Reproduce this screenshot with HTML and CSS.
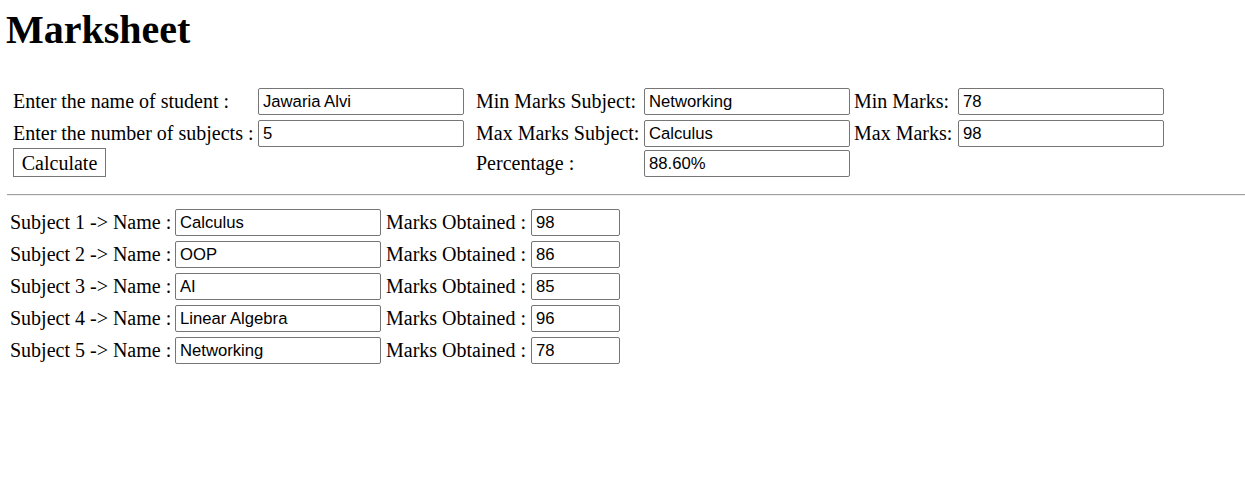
FILE: index.html
```html
<!DOCTYPE html>
<html lang="en">
<head>
<meta charset="utf-8">
<title>Marksheet</title>
<link rel="stylesheet" href="styles.css">
</head>
<body>
<h1 class="title">Marksheet</h1>
<form class="summary">
  <label class="cell label">Enter the name of student :</label>
  <div class="cell"><input class="field field-wide" type="text" value="Jawaria Alvi"></div>
  <label class="cell label label-mid">Min Marks Subject:</label>
  <div class="cell"><input class="field field-wide" type="text" value="Networking"></div>
  <label class="cell label label-right">Min Marks:</label>
  <div class="cell"><input class="field field-wide" type="text" value="78"></div>

  <label class="cell label">Enter the number of subjects :</label>
  <div class="cell"><input class="field field-wide" type="text" value="5"></div>
  <label class="cell label label-mid">Max Marks Subject:</label>
  <div class="cell"><input class="field field-wide" type="text" value="Calculus"></div>
  <label class="cell label label-right">Max Marks:</label>
  <div class="cell"><input class="field field-wide" type="text" value="98"></div>

  <div class="cell cell-last cell-button"><button class="calc" type="button">Calculate</button></div>
  <div class="cell cell-last"></div>
  <label class="cell cell-last label label-mid">Percentage :</label>
  <div class="cell cell-last"><input class="field field-wide" type="text" value="88.60%"></div>
</form>
<div class="divider"></div>
<div class="subjects">
  <label class="label">Subject 1 -&gt; Name :</label>
  <input class="field field-wide" type="text" value="Calculus">
  <label class="label label-marks">Marks Obtained :</label>
  <input class="field field-narrow" type="text" value="98">

  <label class="label">Subject 2 -&gt; Name :</label>
  <input class="field field-wide" type="text" value="OOP">
  <label class="label label-marks">Marks Obtained :</label>
  <input class="field field-narrow" type="text" value="86">

  <label class="label">Subject 3 -&gt; Name :</label>
  <input class="field field-wide" type="text" value="AI">
  <label class="label label-marks">Marks Obtained :</label>
  <input class="field field-narrow" type="text" value="85">

  <label class="label">Subject 4 -&gt; Name :</label>
  <input class="field field-wide" type="text" value="Linear Algebra">
  <label class="label label-marks">Marks Obtained :</label>
  <input class="field field-narrow" type="text" value="96">

  <label class="label">Subject 5 -&gt; Name :</label>
  <input class="field field-wide" type="text" value="Networking">
  <label class="label label-marks">Marks Obtained :</label>
  <input class="field field-narrow" type="text" value="78">
</div>
</body>
</html>
```
FILE: styles.css
```css
html, body {
  background: #ffffff;
}

body {
  margin: 0;
  font-family: "Liberation Serif", "Times New Roman", serif;
  font-size: 20px;
  color: #000000;
}

.title {
  margin: 0;
  padding: 7px 0 0 6px;
  font-size: 40px;
  line-height: 46px;
  font-weight: bold;
}

.summary {
  display: grid;
  grid-template-columns: 245px 206px 180px 206px 108px 206px;
  grid-template-rows: 32px 28px 29px;
  margin: 35px 0 0 13px;
}

.cell {
  display: flex;
  align-items: center;
  height: 27px;
  align-self: start;
}

.cell-last {
  align-self: end;
}

.cell-button {
  height: 29px;
}

.label {
  display: flex;
  align-items: center;
  height: 27px;
  white-space: nowrap;
  line-height: 23px;
}

.label-mid {
  padding-left: 12px;
}

.label-right {
  padding-left: 4px;
}

.field {
  box-sizing: border-box;
  height: 27px;
  margin: 0;
  padding: 0 4px;
  border: 1px solid #767676;
  border-radius: 2px;
  background: #ffffff;
  color: #000000;
  font-family: "Liberation Sans", Arial, sans-serif;
  font-size: 16.67px;
}

.field-wide {
  width: 206px;
}

.field-narrow {
  width: 89px;
}

.calc {
  box-sizing: border-box;
  width: 93px;
  height: 29px;
  margin: 0;
  padding: 2px 0 0;
  border: 1px solid #767676;
  border-radius: 0;
  background: #ffffff;
  color: #000000;
  font-family: "Liberation Serif", "Times New Roman", serif;
  font-size: 20px;
  line-height: 25px;
}

.divider {
  margin: 17px 0 0 7px;
  border-top: 1px solid #a0a0a0;
  border-bottom: 1px solid #eeeeee;
}

.subjects {
  display: grid;
  grid-template-columns: 165px 206px 150px 89px;
  grid-auto-rows: 27px;
  row-gap: 5px;
  margin: 13px 0 0 10px;
}

.label-marks {
  padding-left: 5px;
}
```
